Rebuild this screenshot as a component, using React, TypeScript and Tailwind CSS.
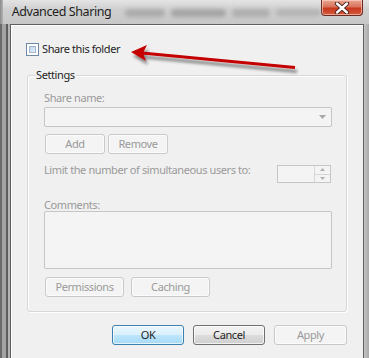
import React from "react";

const font = { fontFamily: '"Noto Sans", "Open Sans", sans-serif' };

function DisabledButton({ label, w }: { label: string; w: string }) {
  return (
    <div
      className={`${w} h-[20px] rounded-[3px] border border-[#c9c9c9] bg-[#f4f4f4] shadow-[inset_0_0_0_1px_#fbfbfb] flex items-center justify-center text-[11px] tracking-[-0.4px] leading-[14px] text-[#9a9a9a]`}
    >
      {label}
    </div>
  );
}

export default function App() {
  return (
    <div
      className="relative w-[369px] h-[358px] overflow-hidden flex flex-col bg-[#c9c9c9] text-[11px] tracking-[-0.4px]"
      style={font}
    >
      {/* Title bar */}
      <div className="h-[24px] flex items-start bg-[linear-gradient(to_bottom,#e4e4e4,#cfcfcf_40%,#c8c8c8)] shrink-0">
        <div className="w-[3px] self-stretch bg-[linear-gradient(to_right,#8a8a8a,#b5b5b5)]" />
        <div className="pl-[9px] pt-[3px] text-[12.5px] leading-[18px] text-[#1e1e1e] whitespace-nowrap">
          Advanced Sharing
        </div>
        <div className="ml-[14px] mt-[9px] flex gap-[6px] blur-[2px] opacity-50">
          <div className="w-[40px] h-[8px] bg-[#8a8a8a] rounded-full" />
          <div className="w-[55px] h-[8px] bg-[#7d7d7d] rounded-full" />
          <div className="w-[38px] h-[8px] bg-[#8f8f8f] rounded-full" />
          <div className="w-[45px] h-[7px] bg-[#9a9a9a] rounded-full" />
        </div>
        <div className="ml-auto mr-[6px] w-[47px] h-[16px] rounded-b-[4px] border border-t-0 border-[#6b2a22] bg-[linear-gradient(to_bottom,#e8a591,#d9725b_45%,#c7381e_55%,#d65a3c)] shadow-[inset_0_0_0_1px_rgba(255,220,210,0.6)] flex items-center justify-center">
          <svg width="16" height="12" viewBox="0 0 16 12">
            <path
              d="M3 1.5 L13 10.5 M13 1.5 L3 10.5"
              stroke="#3a1a14"
              strokeWidth="4.2"
              strokeLinecap="round"
            />
            <path
              d="M3 1.5 L13 10.5 M13 1.5 L3 10.5"
              stroke="#ffffff"
              strokeWidth="2.4"
              strokeLinecap="round"
            />
          </svg>
        </div>
      </div>

      {/* Body row with frames */}
      <div className="flex flex-1 min-h-0">
        <div className="w-[10px] shrink-0 bg-[linear-gradient(to_right,#6a6a6a_0px,#6a6a6a_2px,#a3a3a3_2px,#a3a3a3_6px,#5d5d5d_6px,#5d5d5d_8px,#b4b4b4_8px,#b4b4b4_10px)]" />
        <div className="flex-1 border-l border-t border-r border-[#5f5f5f] bg-[#f0f0f0] shadow-[inset_1px_1px_0_#ffffff] flex flex-col">
          {/* Checkbox row */}
          <div className="pl-[15px] pt-[17px] flex items-center gap-[3px]">
            <div className="w-[13px] h-[13px] border border-[#6f88a6] bg-white p-[2px]">
              <div className="w-full h-full border border-[#9fb6cc] bg-[linear-gradient(135deg,#bcd3e9,#e6f0f8)]" />
            </div>
            <span className="leading-[14px] text-[#1e1e1e]">Share this folder</span>
          </div>

          {/* Settings group */}
          <div className="mt-[19px] ml-[16px] w-[320px] h-[237px] border border-[#d5d9dc] rounded-[3px] shadow-[inset_1px_1px_0_#ffffff,1px_1px_0_#ffffff] flex flex-col">
            <div className="-mt-[9px] ml-[7px] px-[1px] w-fit bg-[#f0f0f0] leading-[16px] text-[#1e1e1e]">
              Settings
            </div>
            <div className="pl-[16px] pr-[13px] flex flex-col">
              <div className="mt-[7px] leading-[16px] text-[#9a9a9a]">Share name:</div>
              <div className="mt-[1px] h-[20px] w-[288px] rounded-[2px] border border-[#c6c6c6] bg-[#f4f4f4] flex items-center justify-end pr-[5px]">
                <svg width="7" height="4" viewBox="0 0 7 4">
                  <path d="M0 0 L7 0 L3.5 4 Z" fill="#a8a8a8" />
                </svg>
              </div>
              <div className="mt-[7px] flex gap-[3px] pl-[1px]">
                <DisabledButton label="Add" w="w-[60px]" />
                <DisabledButton label="Remove" w="w-[60px]" />
              </div>
              <div className="mt-[11px] flex items-start">
                <div className="-mt-[3px] leading-[16px] text-[#9a9a9a] whitespace-nowrap">
                  Limit the number of simultaneous users to:
                </div>
                <div className="ml-auto mr-[2px] w-[54px] h-[18px] border border-[#c6c6c6] bg-[#f4f4f4] flex justify-end">
                  <div className="w-[16px] h-full border-l border-[#d6d6d6] flex flex-col">
                    <div className="flex-1 flex items-center justify-center border-b border-[#d6d6d6]">
                      <svg width="5" height="3" viewBox="0 0 5 3">
                        <path d="M0 3 L5 3 L2.5 0 Z" fill="#b0b0b0" />
                      </svg>
                    </div>
                    <div className="flex-1 flex items-center justify-center">
                      <svg width="5" height="3" viewBox="0 0 5 3">
                        <path d="M0 0 L5 0 L2.5 3 Z" fill="#b0b0b0" />
                      </svg>
                    </div>
                  </div>
                </div>
              </div>
              <div className="mt-[15px] leading-[14px] text-[#9a9a9a]">Comments:</div>
              <div className="-mt-[1px] h-[58px] w-[288px] rounded-[2px] border border-[#c6c6c6] bg-[#f4f4f4]" />
              <div className="mt-[8px] flex gap-[7px] pl-[1px]">
                <DisabledButton label="Permissions" w="w-[79px]" />
                <DisabledButton label="Caching" w="w-[79px]" />
              </div>
            </div>
          </div>

          {/* Dialog buttons */}
          <div className="mt-[13px] flex justify-end gap-[9px] pr-[16px]">
            <div className="w-[72px] h-[20px] rounded-[3px] border border-[#3c7fb1] bg-[linear-gradient(to_bottom,#eaf6fd_0%,#d9f0fc_50%,#bee6fd_50%,#a7d9f5_100%)] shadow-[inset_0_0_0_1px_rgba(255,255,255,0.7)] flex items-center justify-center leading-[14px] text-[#1e1e1e]">
              OK
            </div>
            <div className="w-[72px] h-[20px] rounded-[3px] border border-[#707070] bg-[linear-gradient(to_bottom,#f2f2f2_0%,#ebebeb_50%,#dddddd_50%,#cfcfcf_100%)] shadow-[inset_0_0_0_1px_rgba(255,255,255,0.7)] flex items-center justify-center leading-[14px] text-[#1e1e1e]">
              Cancel
            </div>
            <DisabledButton label="Apply" w="w-[73px]" />
          </div>
        </div>
        <div className="w-[5px] shrink-0 bg-[linear-gradient(to_right,#c4c4c4,#a9a9a9)]" />
      </div>

      {/* Annotation arrow */}
      <svg
        className="absolute left-0 top-0 pointer-events-none"
        width="369"
        height="358"
        viewBox="0 0 369 358"
      >
        <defs>
          <filter id="sh" x="-10%" y="-50%" width="130%" height="250%">
            <feDropShadow dx="2" dy="4" stdDeviation="1.6" floodColor="#000" floodOpacity="0.45" />
          </filter>
        </defs>
        <g filter="url(#sh)">
          <line x1="142" y1="53" x2="295" y2="67.5" stroke="#c40000" strokeWidth="3" />
          <path d="M131 52 L147 45 L143 53 L146 61 Z" fill="#c40000" />
        </g>
      </svg>
    </div>
  );
}
